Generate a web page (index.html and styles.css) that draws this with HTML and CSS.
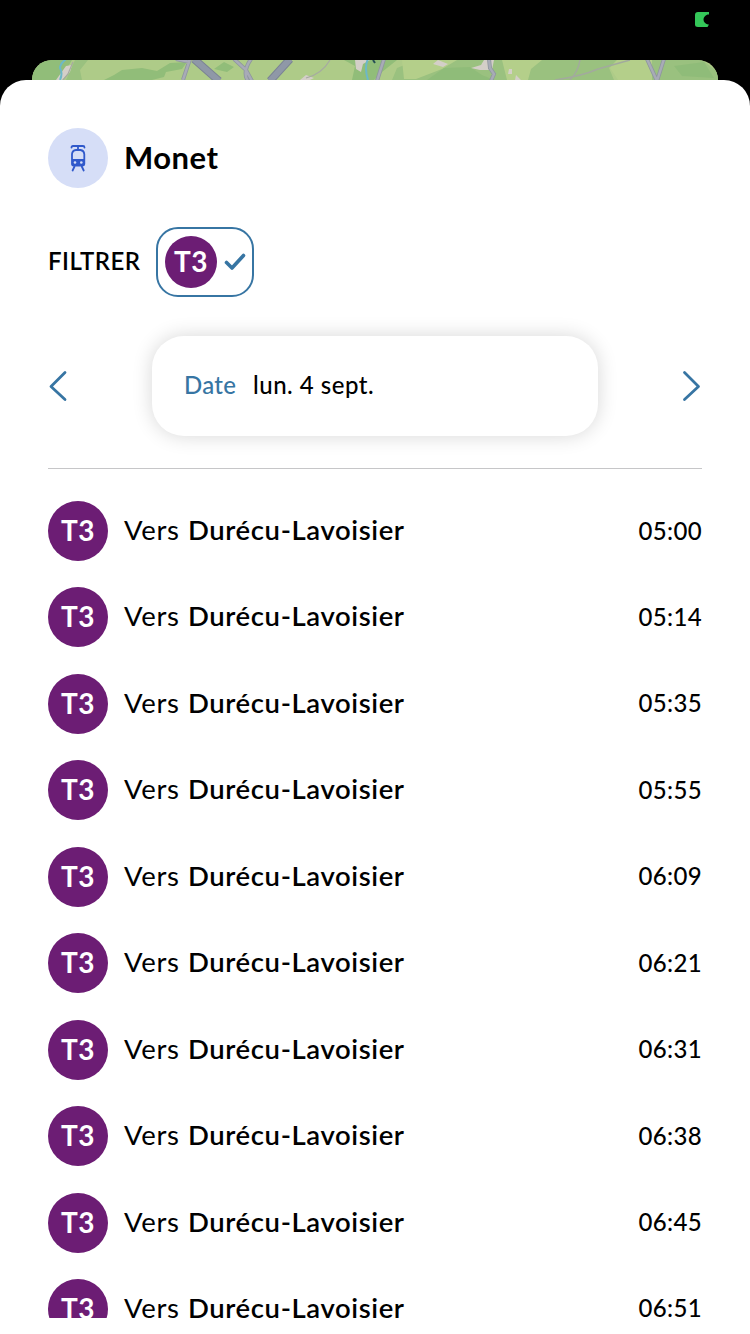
FILE: index.html
```html
<!DOCTYPE html>
<html lang="fr">
<head>
<meta charset="utf-8">
<title>Monet</title>
<link rel="stylesheet" href="styles.css">
</head>
<body>
<div class="status">
  <svg width="16" height="16" viewBox="0 0 16 16"><path d="M3 0H14V2.500H12.500Q8.500 4.500 8.500 7.500Q8.500 11 13 12.500H14L12.500 15H3Q0 15 0 12.500V3Q0 0 3 0Z" fill="#34c759"/></svg>
</div>
<svg class="map" viewBox="0 0 686 20" preserveAspectRatio="none">
  <path fill="#aecb88" d="M0 0H686V20H0Z"/>
  <path fill="#91bd79" d="M0 0H40L28 20H0ZM72 20L82 15 90 10 110 8 125 11 138 3 155 2 150 9 134 12 132 17 120 20ZM182 9L192 2 202 7 195 12ZM312 0L323 6 320 20H342L350 12 365 0Z"/>
  <path fill="#9ac17f" d="M43 0H56L48 10 50 20H34ZM365 8L385 0H510L502 8H495L485 20H360ZM500 0H585L577 8 582 20H480L496 8ZM585 0H670L686 12V20H595L582 7Z"/>
  <path fill="#b4cf8a" d="M370 0H425L410 9 384 19H372ZM470 0H510L499 9 496 20H475ZM585 0H620V20H586L578 8Z"/>
  <path fill="#89b974" d="M395 20L412 8 438 7 450 15 462 20ZM642 6L672 2 682 18 650 16Z" opacity=".6"/>
  <path fill="#d4cfc8" d="M24 20L34 6 40 5 38 12 30 20ZM268 20L274 15 282 18 278 20ZM323 0H338L331 4 329 12 324 9ZM406 0L416 4 411 7 401 4ZM439 8L449 5 452 0H462L460 10 448 10ZM477 9H480V14H476ZM484 15L489 20H483Z"/>
  <g fill="none" stroke-linecap="butt">
    <path d="M34-1Q28 4 28 8Q31 13 28 20M336-1Q332 7 336 20" stroke="#6cb8c8" stroke-width="2"/>
    <path d="M41 2L36 14 31 20M274 18Q290 14 298 0" stroke="#a6aaa1" stroke-width="1.200"/>
    <path d="M144-1L158 2M158-1L151 20M202-1L214 10 220 21M219-1Q210 12 216 21M352-1L345 21M457-1L458 8 462 14 459 21M615-1L625 21M632-1L625 21" stroke="#8e969f" stroke-width="4"/>
    <path d="M144-1L158 2M158-1L151 20M202-1L214 10 220 21M219-1Q210 12 216 21M352-1L345 21M457-1L458 8 462 14 459 21M615-1L625 21M632-1L625 21" stroke="#a8abb7" stroke-width="2.400"/>
    <path d="M162-1L187 21M258-1L238 21" stroke="#7b8494" stroke-width="8"/>
    <path d="M162-1L187 21M258-1L238 21" stroke="#8f98a7" stroke-width="6"/>
    <path d="M523 20Q550 16 566 9L598 0M548 0Q546 12 538 20" stroke="#a2aa9d" stroke-width="1.500"/>
    <path d="M341 0L343 3" stroke="#274f54" stroke-width="2"/>
  </g>
</svg>
<main class="sheet">
  <header class="head">
    <span class="mode">
      <svg width="16" height="28" viewBox="0 0 16 28" fill="none" stroke="#3059cb" stroke-width="1.800" stroke-linecap="round" stroke-linejoin="round">
        <path d="M1.500 3.500Q1.500 2 3 2H13Q14.500 2 14.500 3.500M8 2V5"/>
        <path d="M6 6H10.500Q14 6.500 14.300 10V20Q14.300 21.500 12.800 21.500H3.500Q2 21.500 2 20V10Q2.300 6.500 6 6Z"/>
        <path d="M2 15H14V21.500H2Z" fill="#3059cb" stroke="none"/>
        <path d="M4.500 22.500L2.600 26.500M11.800 22.500L13.700 26.500"/>
        <circle cx="5" cy="18.500" r="1.300" fill="#d6def7" stroke="none"/><circle cx="11.300" cy="18.500" r="1.300" fill="#d6def7" stroke="none"/>
      </svg>
    </span>
    <h1 class="title">Monet</h1>
  </header>
  <section class="filter">
    <span class="filter-label">FILTRER</span>
    <span class="chip">
      <span class="line line-small">T3</span>
      <svg width="22" height="18" viewBox="0 0 22 18"><path d="M2.500 9.500L8 15 19.500 2.500" fill="none" stroke="#3775a3" stroke-width="3.600" stroke-linecap="round" stroke-linejoin="round"/></svg>
    </span>
  </section>
  <section class="day">
    <svg class="step" width="20" height="32" viewBox="0 0 20 32"><path d="M17 2.500L3 16.500 17 29.500" class="arrow"/></svg>
    <div class="date"><span class="date-label">Date</span><span class="date-value">lun. 4 sept.</span></div>
    <svg class="step" width="20" height="32" viewBox="0 0 20 32"><path d="M2.500 2.500L16.500 16.500 2.500 29.500" class="arrow"/></svg>
  </section>
  <ul class="list">
    <li class="row"><span class="line">T3</span><span class="to">Vers</span><b class="stop">Durécu-Lavoisier</b><time class="time">05:00</time></li>
    <li class="row"><span class="line">T3</span><span class="to">Vers</span><b class="stop">Durécu-Lavoisier</b><time class="time">05:14</time></li>
    <li class="row"><span class="line">T3</span><span class="to">Vers</span><b class="stop">Durécu-Lavoisier</b><time class="time">05:35</time></li>
    <li class="row"><span class="line">T3</span><span class="to">Vers</span><b class="stop">Durécu-Lavoisier</b><time class="time">05:55</time></li>
    <li class="row"><span class="line">T3</span><span class="to">Vers</span><b class="stop">Durécu-Lavoisier</b><time class="time">06:09</time></li>
    <li class="row"><span class="line">T3</span><span class="to">Vers</span><b class="stop">Durécu-Lavoisier</b><time class="time">06:21</time></li>
    <li class="row"><span class="line">T3</span><span class="to">Vers</span><b class="stop">Durécu-Lavoisier</b><time class="time">06:31</time></li>
    <li class="row"><span class="line">T3</span><span class="to">Vers</span><b class="stop">Durécu-Lavoisier</b><time class="time">06:38</time></li>
    <li class="row"><span class="line">T3</span><span class="to">Vers</span><b class="stop">Durécu-Lavoisier</b><time class="time">06:45</time></li>
    <li class="row"><span class="line">T3</span><span class="to">Vers</span><b class="stop">Durécu-Lavoisier</b><time class="time">06:51</time></li>
  </ul>
</main>
</body>
</html>
```
FILE: styles.css
```css
* { box-sizing: border-box; }
body {
  margin: 0;
  width: 750px;
  height: 1334px;
  overflow: hidden;
  display: flex;
  flex-direction: column;
  background: #000;
  color: #000;
  font-family: Lato, "Noto Sans", sans-serif;
  white-space: nowrap;
}
svg { display: block; flex: none; }
.status { height: 60px; padding: 12px 39px 0 0; display: flex; justify-content: flex-end; }
.map { width: 686px; height: 20px; margin: 0 auto; border-radius: 20px 20px 0 0; }
.sheet {
  height: 1254px;
  padding: 48px 48px 16px;
  border-radius: 26px 26px 0 0;
  background: #fff;
  display: flex;
  flex-direction: column;
}
.head { height: 60px; display: flex; align-items: center; gap: 16px; }
.mode { width: 60px; height: 60px; border-radius: 50%; background: #d6def7; display: flex; align-items: center; justify-content: center; }
.title { margin: 0; padding-bottom: 3px; font-size: 31px; line-height: 40px; font-weight: 700; letter-spacing: 0.5px; }
.filter { height: 70px; margin-top: 39px; display: flex; align-items: center; gap: 16px; }
.filter-label { width: 92px; padding-bottom: 3px; font-size: 24px; font-weight: 600; letter-spacing: 0.45px; }
.chip { width: 98px; height: 70px; padding-left: 7px; border: 2px solid #3775a3; border-radius: 22px; display: flex; align-items: center; gap: 7px; }
.line { width: 60px; height: 60px; padding-bottom: 2px; flex: none; border-radius: 50%; background: #6c1d74; color: #fff; font-size: 28px; font-weight: 700; letter-spacing: 0.4px; display: flex; align-items: center; justify-content: center; }
.line-small { width: 52px; height: 52px; }
.day { height: 172px; border-bottom: 1px solid #c6c6c8; display: flex; align-items: center; justify-content: space-between; }
.step { margin-top: 7px; }
.arrow { fill: none; stroke: #3775a3; stroke-width: 2.800; stroke-linecap: round; stroke-linejoin: round; }
.date { width: 446px; height: 100px; margin-top: 7px; padding: 0 0 3px 32px; border-radius: 32px; background: #fff; box-shadow: 0 0 20px rgba(0, 0, 0, 0.16); display: flex; align-items: center; font-size: 24px; font-weight: 500; }
.date-label { width: 69px; color: #3775a3; letter-spacing: 0.3px; }
.date-value { letter-spacing: 0.5px; }
.list { flex: 1; min-height: 0; overflow: hidden; margin: 0; padding: 32px 0 0; list-style: none; }
.row { height: 60px; margin-bottom: 26.45px; display: flex; align-items: center; }
.to { width: 64px; margin-left: 16px; padding-bottom: 3px; font-size: 27.500px; letter-spacing: 0.7px; }
.stop { padding-bottom: 3px; font-size: 27.500px; font-weight: 600; letter-spacing: 0.6px; }
.time { margin-left: auto; padding-bottom: 2px; font-size: 24px; font-weight: 500; letter-spacing: 0.35px; }
```
